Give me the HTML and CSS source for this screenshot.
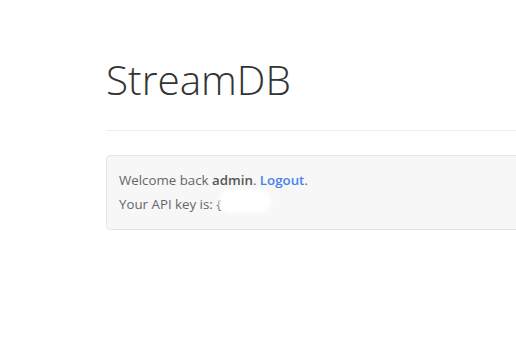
FILE: index.html
```html
<!DOCTYPE html>
<html lang="en">
<head>
  <meta charset="UTF-8">
  <meta name="viewport" content="width=device-width, initial-scale=1.0">
  <title>StreamDB</title>
  <link rel="stylesheet" href="styles.css">
</head>
<body>

  <div class="container">
    <div class="page-header">
      <h1>StreamDB</h1>
    </div>

    <div class="well">
      <p>Welcome back <strong>admin</strong>. <a href="#">Logout</a>.</p>
      <p>Your API key is: <span class="key">{<span class="blur"></span></span></p>
    </div>
  </div>

</body>
</html>
```

FILE: styles.css
```css
body {
  margin: 0;
  padding: 0;
  background-color: #fff;
  overflow: hidden;
  font-family: "Open Sans", Arial, sans-serif;
  font-size: 13.3px;
  line-height: 24px;
  color: #666;
}

.container {
  width: 900px;
  margin-left: 106px;
}

.page-header {
  padding-top: 57px;
  padding-bottom: 28px;
  border-bottom: 1px solid #eee;
}

.page-header h1 {
  margin: 0;
  font-size: 40.5px;
  font-weight: 300;
  line-height: 45px;
  color: #333;
}

.well {
  margin-top: 24px;
  padding: 12px 12px 13px;
  background-color: #f7f7f7;
  border: 1px solid #e5e5e5;
  border-radius: 4px;
}

.well p {
  margin: 0;
}

.well strong {
  font-weight: 600;
  color: #555;
}

.well a {
  color: #4582ec;
  font-weight: 600;
  text-decoration: none;
}

.key {
  position: relative;
}

.blur {
  position: absolute;
  left: 5px;
  top: -4px;
  width: 48px;
  height: 20px;
  background-color: #fff;
  border-radius: 10px;
  box-shadow: 0 0 4px 2px #fff;
}
```
